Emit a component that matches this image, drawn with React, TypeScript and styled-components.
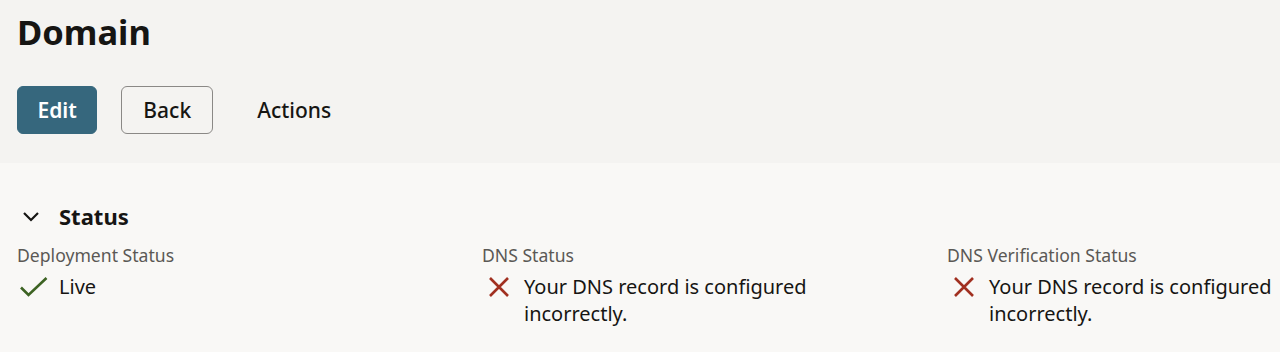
import React from "react";
import styled, { createGlobalStyle } from "styled-components";

const Global = createGlobalStyle`
  html, body { margin: 0; padding: 0; }
  body {
    font-family: "Noto Sans", "Liberation Sans", sans-serif;
    background: #f9f8f6;
    color: #161513;
    width: 1280px;
    overflow: hidden;
  }
`;

const Page = styled.div`
  width: 1280px;
  height: 352px;
  overflow: hidden;
  background: #f9f8f6;
`;

const Header = styled.header`
  background: #f4f3f1;
  height: 163px;
  box-sizing: border-box;
  padding: 10px 17px 0;
`;

const Title = styled.h1`
  margin: 0;
  font-size: 34.5px;
  line-height: 44px;
  font-weight: 700;
  color: #161513;
`;

const Toolbar = styled.div`
  display: flex;
  align-items: center;
  gap: 24px;
  margin-top: 32px;
`;

const Button = styled.button<{ $variant: "primary" | "outline" | "ghost" }>`
  font-family: inherit;
  font-size: 21px;
  height: 48px;
  box-sizing: border-box;
  border-radius: 6px;
  padding: 0 ${(p) => (p.$variant === "primary" ? "19.5px" : p.$variant === "outline" ? "21px" : "19px")};
  cursor: pointer;
  font-weight: ${(p) => (p.$variant === "primary" ? 600 : 500)};
  background: ${(p) => (p.$variant === "primary" ? "#36677d" : "transparent")};
  color: ${(p) => (p.$variant === "primary" ? "#ffffff" : "#161513")};
  border: 1px solid
    ${(p) => (p.$variant === "outline" ? "#8a8886" : p.$variant === "primary" ? "#36677d" : "transparent")};
`;

const Section = styled.section`
  padding: 38px 17px 0;
`;

const SectionHead = styled.div`
  display: flex;
  align-items: center;
  gap: 19px;
  padding-left: 5px;
`;

const SectionTitle = styled.h2`
  margin: 0;
  font-size: 22px;
  line-height: 30px;
  font-weight: 700;
`;

const Grid = styled.div`
  display: grid;
  grid-template-columns: repeat(3, 465px);
  margin-top: 11px;
`;

const Field = styled.div`
  display: flex;
  flex-direction: column;
`;

const Label = styled.div`
  font-size: 17.6px;
  line-height: 26px;
  color: #5b5855;
`;

const Value = styled.div`
  display: flex;
  align-items: flex-start;
  gap: 8px;
  margin-top: 5px;
  font-size: 20px;
  line-height: 27px;
  color: #161513;
`;

const IconSlot = styled.span`
  flex: none;
  width: 34px;
  display: flex;
  justify-content: center;
  padding-top: 3px;
`;

const ValueText = styled.span`
  max-width: 320px;
`;

const Chevron = () => (
  <svg width="18" height="18" viewBox="0 0 18 18" fill="none">
    <path d="M2 6 L9 13 L16 6" stroke="#161513" strokeWidth="2.2" />
  </svg>
);

const Check = () => (
  <svg width="30" height="22" viewBox="0 0 30 22" fill="none">
    <path d="M2 11.5 L9.5 19 L27.5 2" stroke="#3d6323" strokeWidth="2.6" />
  </svg>
);

const Cross = () => (
  <svg width="22" height="22" viewBox="0 0 22 22" fill="none">
    <path d="M2 2 L20 20 M20 2 L2 20" stroke="#a13020" strokeWidth="2.6" />
  </svg>
);

const fields = [
  { label: "Deployment Status", ok: true, text: "Live" },
  { label: "DNS Status", ok: false, text: "Your DNS record is configured incorrectly." },
  { label: "DNS Verification Status", ok: false, text: "Your DNS record is configured incorrectly." },
];

export default function App() {
  return (
    <Page>
      <Global />
      <Header>
        <Title>Domain</Title>
        <Toolbar>
          <Button $variant="primary">Edit</Button>
          <Button $variant="outline">Back</Button>
          <Button $variant="ghost">Actions</Button>
        </Toolbar>
      </Header>
      <Section>
        <SectionHead>
          <Chevron />
          <SectionTitle>Status</SectionTitle>
        </SectionHead>
        <Grid>
          {fields.map((f) => (
            <Field key={f.label}>
              <Label>{f.label}</Label>
              <Value>
                <IconSlot>{f.ok ? <Check /> : <Cross />}</IconSlot>
                <ValueText>{f.text}</ValueText>
              </Value>
            </Field>
          ))}
        </Grid>
      </Section>
    </Page>
  );
}
